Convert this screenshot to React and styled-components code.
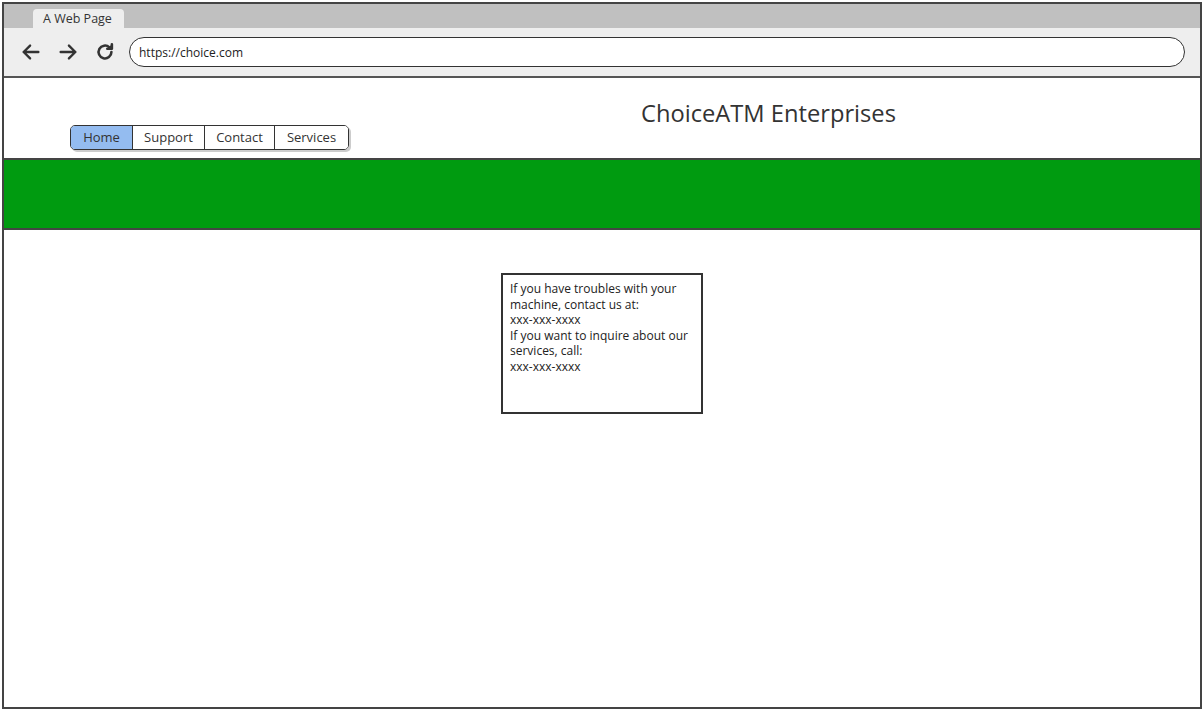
import React from "react";
import styled, { createGlobalStyle } from "styled-components";

const Global = createGlobalStyle`
  html, body { margin: 0; padding: 0; background: #fff; }
  body { font-family: "Open Sans", "Liberation Sans", sans-serif; color: #333; }
  * { box-sizing: border-box; }
`;

const Page = styled.div`
  width: 1203px;
  height: 710px;
  padding: 2px 1px 1px 2px;
`;

const Frame = styled.div`
  width: 100%;
  height: 100%;
  border: 2px solid #444;
  display: flex;
  flex-direction: column;
  overflow: hidden;
`;

const TabStrip = styled.div`
  height: 24px;
  background: #c0c0c0;
  display: flex;
  align-items: flex-end;
  padding-left: 29px;
`;

const Tab = styled.div`
  width: 91px;
  height: 19px;
  background: #eeeeee;
  border-radius: 4px 4px 0 0;
  font-size: 12.5px;
  line-height: 20px;
  padding-left: 10px;
  color: #333;
`;

const Toolbar = styled.div`
  height: 50px;
  background: #eeeeee;
  border-bottom: 2px solid #555;
  display: flex;
  align-items: center;
  padding: 0 15px 0 16px;
`;

const NavIcon = styled.svg`
  width: 22px;
  height: 22px;
  margin-right: ${(p) => p.$gap}px;
  flex: none;
`;

const Address = styled.div`
  flex: 1;
  height: 30px;
  border: 1.5px solid #333;
  border-radius: 15px;
  background: #fff;
  display: flex;
  align-items: center;
  padding-left: 9px;
  font-size: 12px;
  color: #222;
`;

const Header = styled.div`
  height: 80px;
  display: flex;
  align-items: flex-start;
  padding-left: 66px;
`;

const Nav = styled.div`
  margin-top: 47px;
  display: flex;
  border: 1.5px solid #333;
  border-radius: 5px;
  overflow: hidden;
  box-shadow: 2px 2px 0 #ccc;
`;

const NavButton = styled.div`
  width: ${(p) => p.$w}px;
  height: 23px;
  font-size: 13px;
  line-height: 22px;
  text-align: center;
  background: ${(p) => (p.$active ? "#94bcf0" : "#fff")};
  color: #333;
  border-left: ${(p) => (p.$first ? "none" : "1.5px solid #333")};
`;

const Title = styled.h1`
  margin: 20px 0 0 292px;
  font-weight: 400;
  font-size: 23.7px;
  line-height: 30px;
  color: #333;
`;

const Band = styled.div`
  height: 72px;
  background: #009b10;
  border-top: 2px solid #444;
  border-bottom: 2px solid #444;
`;

const Content = styled.div`
  flex: 1;
  display: flex;
  justify-content: center;
  padding-top: 43px;
`;

const InfoBox = styled.div`
  width: 202px;
  height: 141px;
  border: 2px solid #333;
  padding: 6px 7px;
  font-size: 12px;
  line-height: 15.6px;
  color: #222;
`;

const Phone = styled.div`
  font-size: 12px;
`;

export default function App() {
  return (
    <>
      <Global />
      <Page>
        <Frame>
          <TabStrip>
            <Tab>A Web Page</Tab>
          </TabStrip>
          <Toolbar>
            <NavIcon $gap={15} viewBox="0 0 24 24" fill="none" stroke="#333" strokeWidth="2.6" strokeLinecap="round" strokeLinejoin="round">
              <path d="M20 12H4M11 5l-7 7 7 7" />
            </NavIcon>
            <NavIcon $gap={15} viewBox="0 0 24 24" fill="none" stroke="#333" strokeWidth="2.6" strokeLinecap="round" strokeLinejoin="round">
              <path d="M4 12h16M13 5l7 7-7 7" />
            </NavIcon>
            <NavIcon $gap={13} viewBox="0 0 24 24" fill="none" stroke="#333" strokeWidth="2.8" strokeLinecap="round" strokeLinejoin="round">
              <path d="M19 12a7 7 0 1 1-2.2-5.1" />
              <path d="M19.5 3.5v5h-5" fill="#333" />
            </NavIcon>
            <Address>https://choice.com</Address>
          </Toolbar>
          <Header>
            <Nav>
              <NavButton $w={61} $first $active>Home</NavButton>
              <NavButton $w={72}>Support</NavButton>
              <NavButton $w={70}>Contact</NavButton>
              <NavButton $w={74}>Services</NavButton>
            </Nav>
            <Title>ChoiceATM Enterprises</Title>
          </Header>
          <Band />
          <Content>
            <InfoBox>
              If you have troubles with your machine, contact us at:
              <Phone>xxx-xxx-xxxx</Phone>
              If you want to inquire about our services, call:
              <Phone>xxx-xxx-xxxx</Phone>
            </InfoBox>
          </Content>
        </Frame>
      </Page>
    </>
  );
}
